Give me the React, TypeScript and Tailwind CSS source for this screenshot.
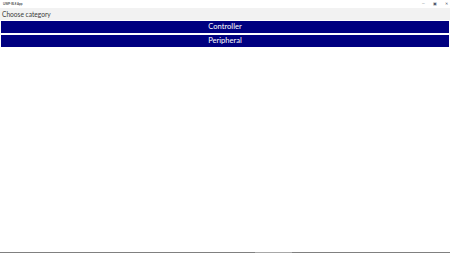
export default function App() {
  return (
    <div className="flex h-[253px] w-[450px] flex-col bg-white font-['Lato',sans-serif]">
      <div className="flex h-[8px] items-center justify-between pl-[3px] pr-[2px]">
        <span className="text-[3px] leading-none text-black">UWP-BLE App</span>
        <div className="flex items-center gap-[8px] text-[4px] leading-none text-gray-600">
          <span>&#8212;</span>
          <span>&#9635;</span>
          <span>&#10005;</span>
        </div>
      </div>
      <div className="flex h-[12px] items-center bg-[#f2f2f2] px-[2px] pt-[1px]">
        <span className="text-[6.6px] leading-none text-[#3a3a3a]">Choose category</span>
      </div>
      <div className="flex flex-col gap-[2px] px-[1px] pt-[1px]">
        <button className="flex h-[12px] items-center justify-center bg-[#000080] text-[7.6px] leading-none text-white">
          Controller
        </button>
        <button className="flex h-[12px] items-center justify-center bg-[#000080] text-[7.6px] leading-none text-white">
          Peripheral
        </button>
      </div>
      <div className="flex-1" />
      <div className="flex h-[1px]">
        <div className="w-[255px] bg-[#808080]" />
        <div className="w-[37px] bg-[#a8a8a8]" />
        <div className="flex-1 bg-[#808080]" />
      </div>
    </div>
  );
}
